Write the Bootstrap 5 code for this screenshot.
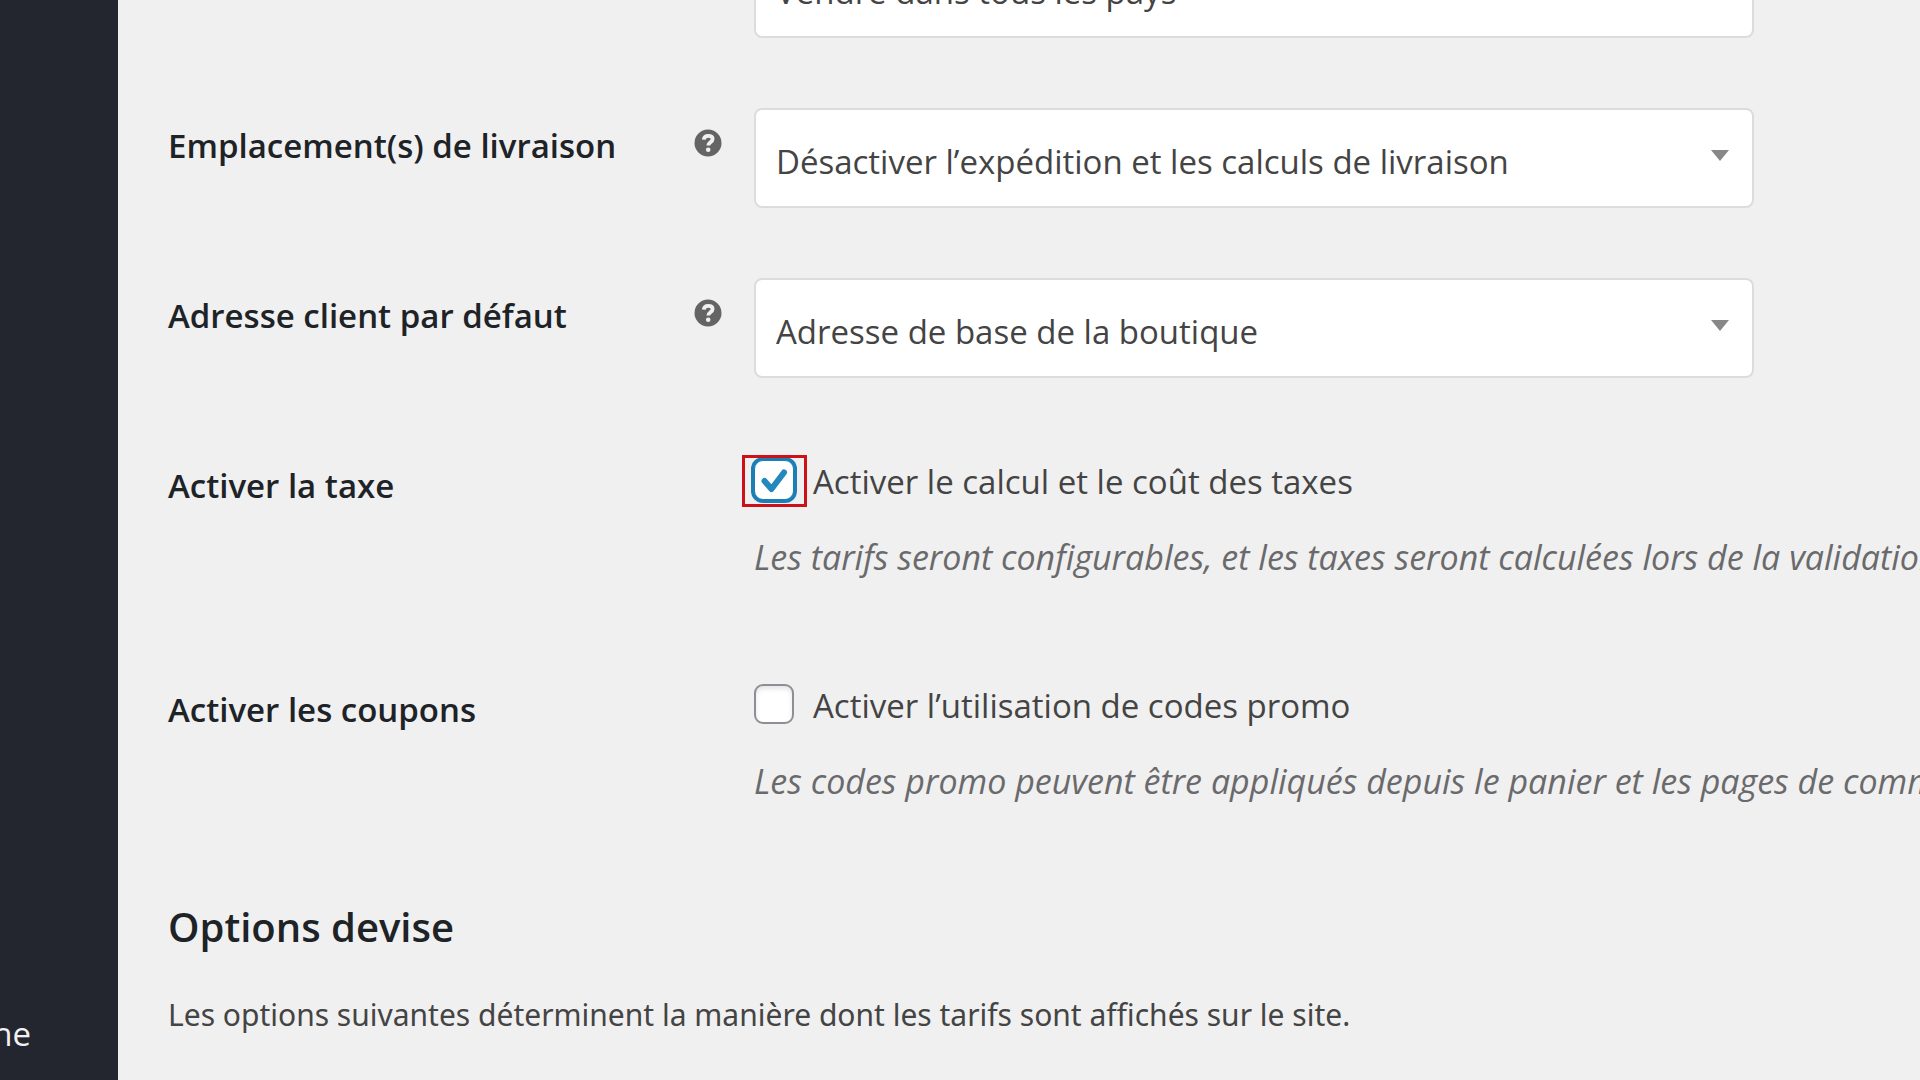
<!DOCTYPE html>
<html lang="fr">
<head>
<meta charset="utf-8">
<meta name="viewport" content="width=device-width, initial-scale=1">
<title>Réglages – Général</title>
<link href="https://cdn.jsdelivr.net/npm/bootstrap@5.3.0/dist/css/bootstrap.min.css" rel="stylesheet">
<style>
body{background:#f0f0f0;color:#444;font-family:"Open Sans","Noto Sans",sans-serif;font-size:33px;line-height:48px;overflow:hidden}
.admin-menu{width:118px;background:#23252f}
.admin-menu a{color:#f0f0f1;font-size:33px;padding:0 87px 22px 0}
.settings{padding-left:50px}
.settings-form{margin-top:-97px}
.setting{padding:35px 0}
.setting-label{width:586px;padding-right:32px}
.setting-label label,.setting-label span{color:#1d2327;font-size:33px;font-weight:600;padding-top:14px}
.setting-help{width:28px;height:28px;margin-top:21px;color:#646464}
.setting-select{max-width:1000px;height:100px;padding:7px 72px 0 20px;border:2px solid #dcdcde;border-radius:8px;color:#444;font-size:33px;line-height:48px;
background:#fff url("data:image/svg+xml,%3Csvg xmlns='http://www.w3.org/2000/svg' viewBox='0 0 18 11'%3E%3Cpath d='M0 0h18L9 11z' fill='%23888'/%3E%3C/svg%3E") no-repeat right 23px top 40px/18px 11px}
.setting-check{padding:47px 0 56px}
.setting-check .setting-label label,.setting-check .setting-label span{padding-top:2px}
.setting-check .form-check{min-height:0;line-height:40px;gap:19px}
.setting-check .form-check label{padding-top:2px;margin-bottom:-2px}
.setting-check .form-check-input{width:40px;height:40px;margin:0;float:none;border:2px solid #8c8f94;border-radius:9px;background-color:#fff;box-shadow:inset 0 3px 5px #0000001a}
.setting-check .form-check-input:checked{border:1px solid #1b7fb5;box-shadow:0 0 0 3px #1b7fb5;
background:#fff url("data:image/svg+xml,%3Csvg xmlns='http://www.w3.org/2000/svg' viewBox='0 0 40 40'%3E%3Cpath d='M10.500 21l7 8L30 12.500' fill='none' stroke='%232588bd' stroke-width='6' stroke-linecap='round' stroke-linejoin='round'/%3E%3C/svg%3E") center/40px 40px no-repeat}
.marked::before{content:"";position:absolute;inset:-5px -13px -7px -12px;border:3px solid #cc1119;pointer-events:none}
.setting-note{font-size:34px;margin:33px 0 0;color:#6a6a6c}
.section-title{font-size:40px;line-height:48px;font-weight:600;color:#1d2327;margin:42px 0 0}
.section-text{font-family:"Noto Sans","Open Sans",sans-serif;font-size:30px;margin:40px 0 0}
</style>
</head>
<body>
<div class="d-flex vh-100">
  <nav class="admin-menu d-flex flex-column justify-content-end align-items-end flex-shrink-0 overflow-hidden" aria-label="Menu">
    <a class="text-decoration-none text-nowrap" href="#">ne</a>
  </nav>
  <main class="settings flex-grow-1 overflow-hidden">
    <form class="settings-form">
      <div class="setting d-flex">
        <div class="setting-label d-flex justify-content-between flex-shrink-0">
          <label for="sell">Emplacement(s) de vente</label>
        </div>
        <select class="setting-select form-select" id="sell"><option>Vendre dans tous les pays</option></select>
      </div>
      <div class="setting d-flex">
        <div class="setting-label d-flex justify-content-between flex-shrink-0">
          <label for="ship">Emplacement(s) de livraison</label>
          <svg class="setting-help" viewBox="0 0 28 28" aria-hidden="true"><circle cx="14" cy="14" r="13.500" fill="currentColor"/><path d="M9.800 10.600C10 7.800 11.800 6.800 14.300 6.800c2.600 0 4.300 1.300 4.300 3.200 0 3.400-4.300 3.200-4.300 6.600" fill="none" stroke="#f0f0f0" stroke-width="3.800"/><circle cx="14.200" cy="20.800" r="2.300" fill="#f0f0f0"/></svg>
        </div>
        <select class="setting-select form-select" id="ship"><option>Désactiver l’expédition et les calculs de livraison</option></select>
      </div>
      <div class="setting d-flex">
        <div class="setting-label d-flex justify-content-between flex-shrink-0">
          <label for="addr">Adresse client par défaut</label>
          <svg class="setting-help" viewBox="0 0 28 28" aria-hidden="true"><circle cx="14" cy="14" r="13.500" fill="currentColor"/><path d="M9.800 10.600C10 7.800 11.800 6.800 14.300 6.800c2.600 0 4.300 1.300 4.300 3.200 0 3.400-4.300 3.200-4.300 6.600" fill="none" stroke="#f0f0f0" stroke-width="3.800"/><circle cx="14.200" cy="20.800" r="2.300" fill="#f0f0f0"/></svg>
        </div>
        <select class="setting-select form-select" id="addr"><option>Adresse de base de la boutique</option></select>
      </div>
      <div class="setting-check d-flex">
        <div class="setting-label flex-shrink-0"><span class="d-block">Activer la taxe</span></div>
        <div class="text-nowrap">
          <div class="form-check d-flex align-items-center p-0 m-0">
            <div class="marked position-relative d-flex"><input class="form-check-input" type="checkbox" id="tax" checked></div>
            <label for="tax">Activer le calcul et le coût des taxes</label>
          </div>
          <p class="setting-note fst-italic">Les tarifs seront configurables, et les taxes seront calculées lors de la validation</p>
        </div>
      </div>
      <div class="setting-check d-flex">
        <div class="setting-label flex-shrink-0"><span class="d-block">Activer les coupons</span></div>
        <div class="text-nowrap">
          <div class="form-check d-flex align-items-center p-0 m-0">
            <input class="form-check-input" type="checkbox" id="coupon">
            <label for="coupon">Activer l’utilisation de codes promo</label>
          </div>
          <p class="setting-note fst-italic">Les codes promo peuvent être appliqués depuis le panier et les pages de commande</p>
        </div>
      </div>
      <h2 class="section-title">Options devise</h2>
      <p class="section-text">Les options suivantes déterminent la manière dont les tarifs sont affichés sur le site.</p>
    </form>
  </main>
</div>
<script src="https://cdn.jsdelivr.net/npm/bootstrap@5.3.0/dist/js/bootstrap.bundle.min.js"></script>
</body>
</html>
